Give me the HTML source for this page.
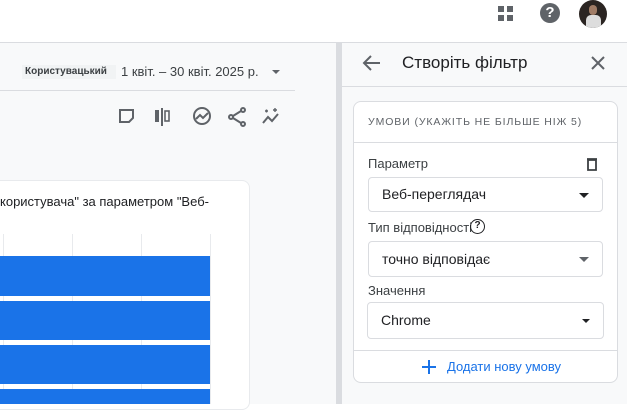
<!DOCTYPE html>
<html><head><meta charset="utf-8"><style>
*{box-sizing:border-box;margin:0;padding:0}
body{width:627px;height:404px;overflow:hidden;position:relative;background:#fff;font-family:"Liberation Sans",Arial,sans-serif;color:#202124}
.abs{position:absolute}
.sel{position:absolute;left:368px;width:235px;border:1px solid #dadce0;border-radius:4px;background:#fff;font-size:14px;color:#202124;padding-left:13px}
.caret{position:absolute;right:13px;top:50%;margin-top:-2px;width:0;height:0;border-left:5px solid transparent;border-right:5px solid transparent;border-top:5px solid #202124}
.lbl{position:absolute;left:368px;font-size:13px;color:#3c4043}
</style></head><body>
<div class="abs" style="left:0;top:42px;width:627px;height:1px;background:#dadce0"></div>
<svg class="abs" style="left:498px;top:5px" width="17" height="17"><rect x="0" y="1" width="6" height="6" fill="#5f6368"/><rect x="9" y="1" width="6" height="6" fill="#5f6368"/><rect x="0" y="10" width="6" height="6" fill="#5f6368"/><rect x="9" y="10" width="6" height="6" fill="#5f6368"/></svg>
<div class="abs" style="left:540px;top:3px;width:20px;height:20px;border-radius:50%;background:#5f6368;color:#fff;font-weight:bold;font-size:15px;text-align:center;line-height:20px">?</div>
<div class="abs" style="left:579px;top:0px;width:28px;height:28px;border-radius:50%;background:#2b2522;overflow:hidden"><div style="position:absolute;left:7px;top:15px;width:15px;height:14px;background:#ddd;border-radius:5px 5px 0 0"></div><div style="position:absolute;left:10px;top:5px;width:8px;height:10px;background:#a07c66;border-radius:4px"></div></div>
<div class="abs" style="left:0;top:43px;width:336px;height:361px;background:#f8f9fa"></div>
<div class="abs" style="left:336px;top:43px;width:6px;height:361px;background:#dadce0"></div>
<div class="abs" style="left:22px;top:65px;width:94px;height:14px;background:#f1f3f4;font-size:10px;font-weight:bold;color:#3c4043;line-height:14px;padding-left:3px">Користувацький</div>
<div class="abs" style="left:121px;top:64px;font-size:13px;color:#3c4043">1 квіт. – 30 квіт. 2025 р.</div>
<div class="abs" style="left:272px;top:70px;border-left:4px solid transparent;border-right:4px solid transparent;border-top:4px solid #5f6368"></div>
<div class="abs" style="left:0;top:90px;width:295px;height:1px;background:#dadce0"></div>
<svg class="abs" style="left:118px;top:106px" width="170" height="22" fill="none" stroke="#5f6368" stroke-width="2">
<path d="M2 4h13v8l-4 4H2z"/>
<rect x="37" y="4" width="4" height="12" fill="#5f6368" stroke="none"/><path d="M44 2v18"/><rect x="47" y="5" width="4" height="10" stroke-width="1.6"/>
<circle cx="84" cy="10" r="8"/><path d="M78 13l4-4 3 3 5-5"/>
<circle cx="125" cy="4" r="2"/><circle cx="113" cy="11" r="2"/><circle cx="125" cy="18" r="2"/><path d="M115 10l8-5M115 12l8 5"/>
<path d="M145 17l5-6 4 4 6-7" /><path d="M147 5h3M148.5 3.5v3M157 2v4M155 4h4" stroke-width="1.4"/>
</svg>
<div class="abs" style="left:-8px;top:180px;width:258px;height:230px;background:#fff;border:1px solid #e8eaed;border-radius:8px"></div>
<div class="abs" style="left:0;top:194px;font-size:13px;color:#202124;white-space:nowrap">користувача" за параметром "Веб-</div>
<div class="abs" style="left:3px;top:234px;width:1px;height:170px;background:#e8eaed"></div>
<div class="abs" style="left:72px;top:234px;width:1px;height:170px;background:#e8eaed"></div>
<div class="abs" style="left:141px;top:234px;width:1px;height:170px;background:#e8eaed"></div>
<div class="abs" style="left:210px;top:234px;width:1px;height:170px;background:#e8eaed"></div>
<div class="abs" style="left:0;top:256px;width:210px;height:40px;background:#1a73e8"></div>
<div class="abs" style="left:0;top:301px;width:210px;height:39px;background:#1a73e8"></div>
<div class="abs" style="left:0;top:345px;width:210px;height:39px;background:#1a73e8"></div>
<div class="abs" style="left:0;top:389px;width:210px;height:15px;background:#1a73e8"></div>
<div class="abs" style="left:342px;top:43px;width:285px;height:361px;background:#f8f9fa"></div>
<svg class="abs" style="left:362px;top:54px" width="20" height="18" fill="none" stroke="#5f6368" stroke-width="2"><path d="M18 9H3M9 2L2 9l7 7"/></svg>
<div class="abs" style="left:402px;top:53px;font-size:17px;color:#202124">Створіть фільтр</div>
<svg class="abs" style="left:591px;top:56px" width="14" height="14" stroke="#5f6368" stroke-width="2"><path d="M1 1l12 12M13 1L1 13"/></svg>
<div class="abs" style="left:342px;top:86px;width:285px;height:1px;background:#dadce0"></div>
<div class="abs" style="left:353px;top:101px;width:265px;height:282px;background:#fff;border:1px solid #dadce0;border-radius:8px"></div>
<div class="abs" style="left:368px;top:116px;font-size:10.5px;letter-spacing:0.9px;color:#5f6368">УМОВИ (УКАЖІТЬ НЕ БІЛЬШЕ НІЖ 5)</div>
<div class="abs" style="left:354px;top:142px;width:263px;height:1px;background:#dadce0"></div>
<div class="lbl" style="top:156px">Параметр</div>
<svg class="abs" style="left:586px;top:157px" width="12" height="14" fill="none" stroke="#3c4043" stroke-width="1.8"><path d="M2 3h8v10H2zM1 2h10"/></svg>
<div class="sel" style="top:177px;height:35px;line-height:33px">Веб-переглядач<div class="caret"></div></div>
<div class="lbl" style="top:220px">Тип відповідності</div>
<div class="abs" style="left:470px;top:219px;width:15px;height:15px;border:1.6px solid #202124;border-radius:50%;font-size:10px;font-weight:bold;text-align:center;line-height:12px">?</div>
<div class="sel" style="top:241px;height:36px;line-height:34px">точно відповідає<div class="caret" style="border-top-color:#5f6368"></div></div>
<div class="lbl" style="top:283px">Значення</div>
<div class="sel" style="left:367px;width:237px;top:302px;height:37px;line-height:35px">Chrome<div class="caret" style="border-left-width:4px;border-right-width:4px;border-top-width:4px"></div></div>
<div class="abs" style="left:354px;top:350px;width:263px;height:1px;background:#dadce0"></div>
<svg class="abs" style="left:422px;top:360px" width="14" height="14" stroke="#1a73e8" stroke-width="2"><path d="M7 0v14M0 7h14"/></svg>
<div class="abs" style="left:447px;top:359px;font-size:13px;color:#1a73e8">Додати нову умову</div>
</body></html>
